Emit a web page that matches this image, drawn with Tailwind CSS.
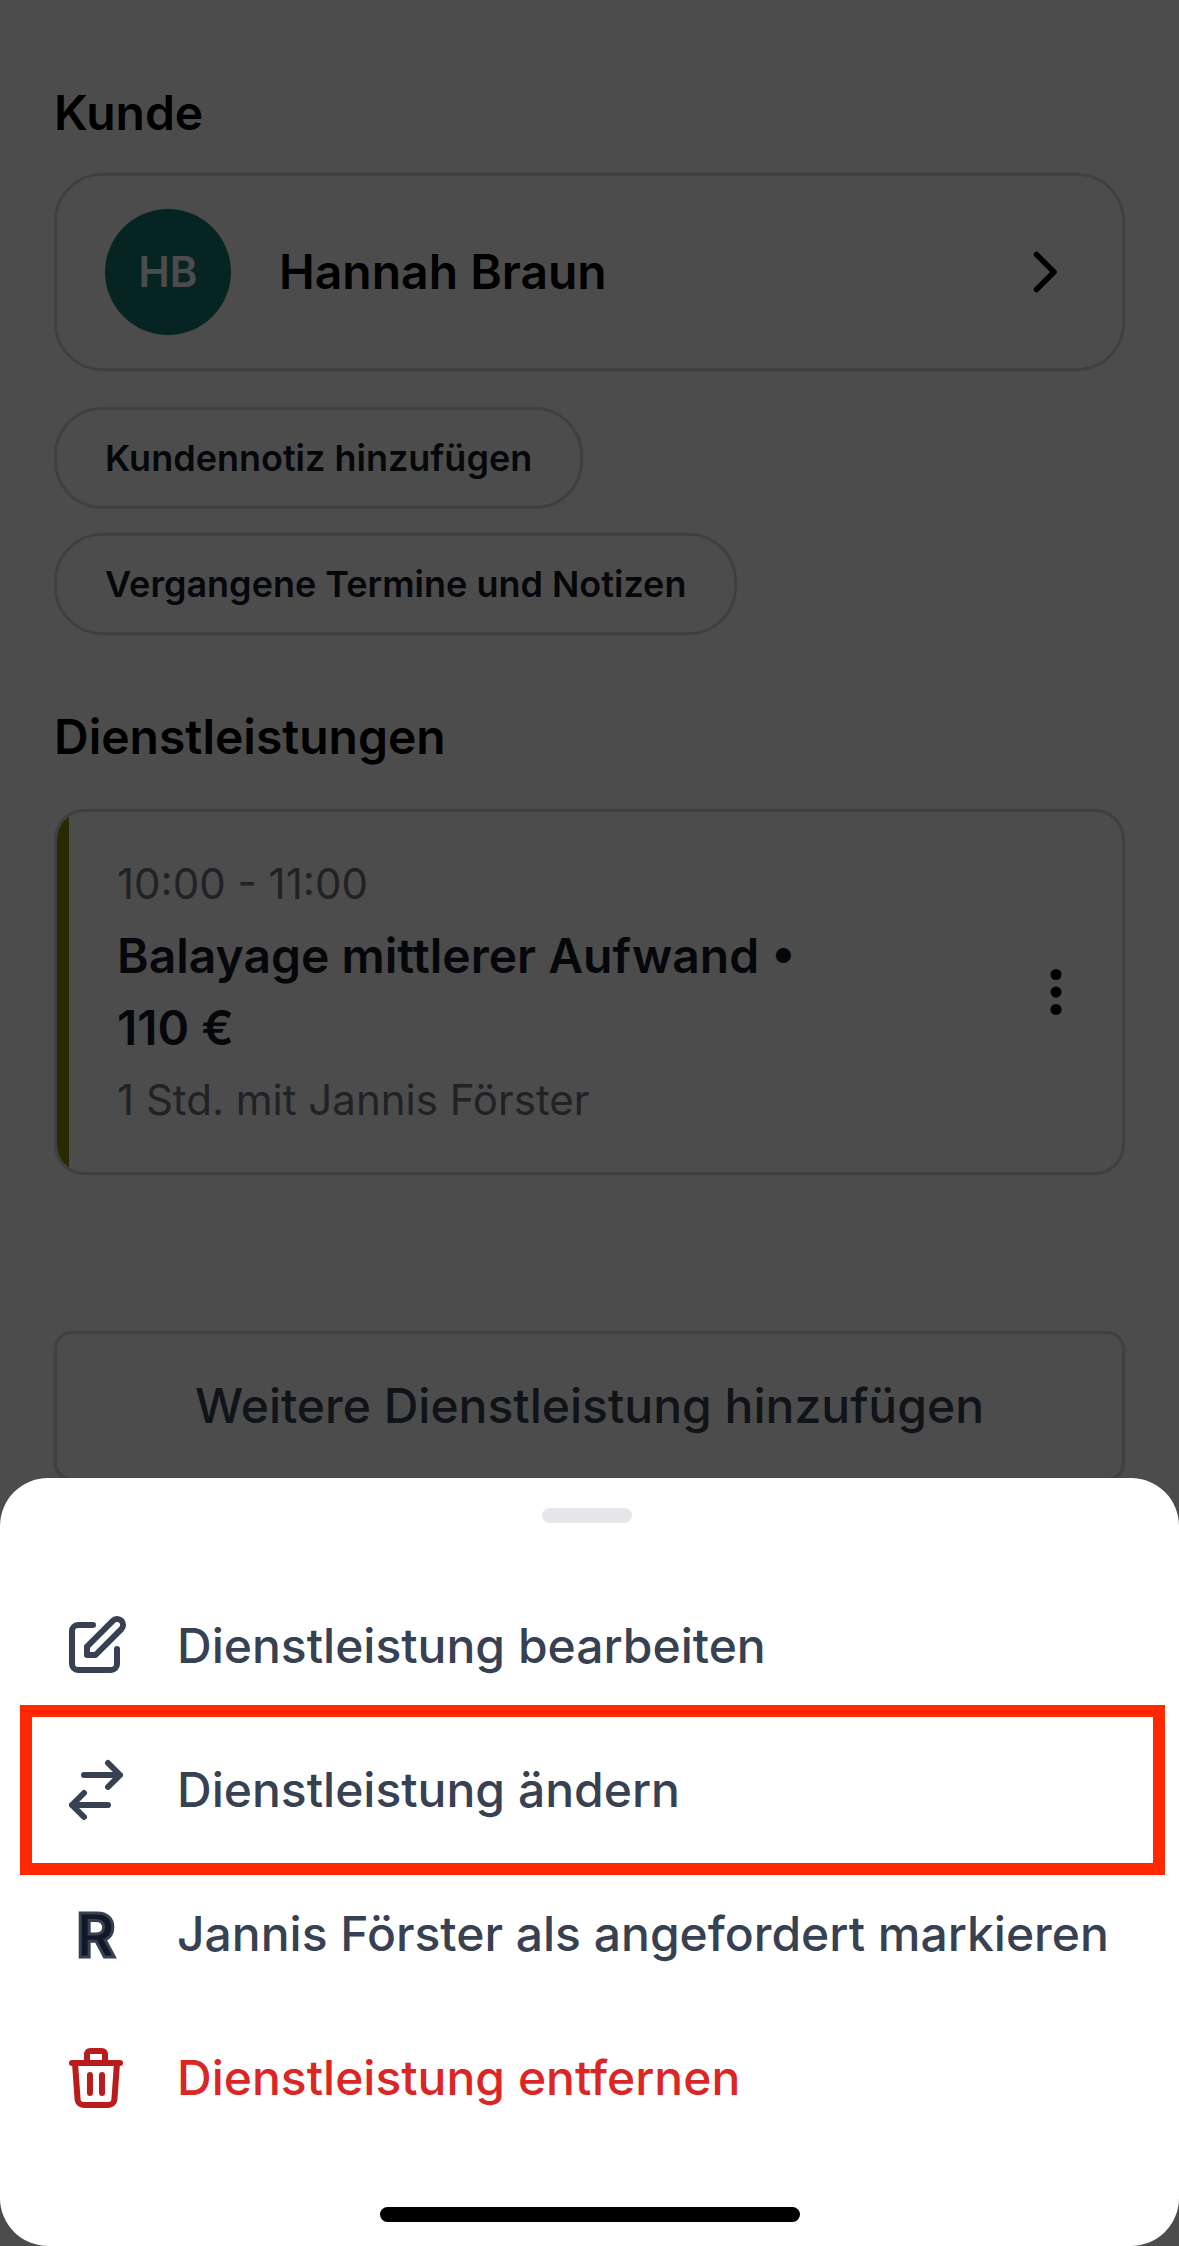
<!DOCTYPE html>
<html lang="de">
<head>
<meta charset="utf-8">
<meta name="viewport" content="width=device-width, initial-scale=1">
<title>Termin</title>
<script src="https://cdn.jsdelivr.net/npm/@tailwindcss/browser@4"></script>
</head>
<body class="min-h-screen overflow-hidden bg-white font-['Inter',sans-serif] text-5xl/[72px] text-black">

<main class="flex flex-col px-[54px] pt-[77px]">
  <section class="flex flex-col items-start">
    <h2 class="font-semibold">Kunde</h2>
    <a href="#kunde" class="mt-6 flex w-full items-center gap-12 rounded-[48px] border-3 border-[#d1d5db] px-12 py-[33px]">
      <span class="flex size-[126px] items-center justify-center rounded-full bg-[#14786e] text-[42px] font-semibold text-white">HB</span>
      <span class="flex-1 font-semibold">Hannah Braun</span>
      <svg class="size-[60px]" viewBox="0 0 24 24" fill="none" stroke="currentColor" stroke-width="2.2" stroke-linecap="round" stroke-linejoin="round" aria-hidden="true"><path d="M9 5l7 7-7 7"/></svg>
    </a>
    <button type="button" class="mt-9 rounded-[48px] border-3 border-[#d1d5db] px-12 py-6 text-4xl/[48px] font-semibold text-[#111827]">Kundennotiz hinzufügen</button>
    <button type="button" class="mt-6 rounded-[48px] border-3 border-[#d1d5db] px-12 py-6 text-4xl/[48px] font-semibold text-[#111827]">Vergangene Termine und Notizen</button>
  </section>

  <section class="mt-[66px] flex flex-col">
    <h2 class="font-semibold">Dienstleistungen</h2>
    <article class="mt-9 flex overflow-hidden rounded-[30px] border-3 border-[#d1d5db]">
      <div class="w-3 bg-[#8d8d00]"></div>
      <div class="flex flex-1 items-center py-9 pr-9 pl-12">
        <div class="flex-1 pr-36">
          <p class="text-[42px]/[72px] text-[#6b7280]">10:00 - 11:00</p>
          <h3 class="font-semibold text-[#111827]">Balayage mittlerer Aufwand • 110&nbsp;€</h3>
          <p class="text-[42px]/[72px] text-[#6b7280]">1 Std. mit Jannis Förster</p>
        </div>
        <button type="button" aria-label="Weitere Optionen">
          <svg class="block size-[60px]" viewBox="0 0 24 24" fill="currentColor" aria-hidden="true"><circle cx="12" cy="5" r="2.2"/><circle cx="12" cy="12" r="2.2"/><circle cx="12" cy="19" r="2.2"/></svg>
        </button>
      </div>
    </article>
    <button type="button" class="mt-[156px] rounded-[18px] border-3 border-[#d1d5db] py-9 font-medium text-[#374151] shadow-sm">Weitere Dienstleistung hinzufügen</button>
  </section>
</main>

<div class="fixed inset-0 flex flex-col justify-end bg-black/70">
  <div role="dialog" aria-label="Dienstleistung" class="flex flex-col items-center rounded-[48px] bg-white pt-[30px] pb-6">
    <div class="mr-[5px] h-[15px] w-[90px] rounded-lg bg-[#e5e7eb]"></div>
    <ul class="mt-[51px] w-full font-medium text-[#374151]">
      <li>
        <button type="button" class="flex h-36 w-full items-center gap-[45px] px-[60px] text-left">
          <svg class="size-[72px]" viewBox="0 0 24 24" fill="none" stroke="currentColor" stroke-width="2" stroke-linecap="round" stroke-linejoin="round" aria-hidden="true"><path d="M11 5H6a2 2 0 00-2 2v11a2 2 0 002 2h11a2 2 0 002-2v-5m-1.414-9.414a2 2 0 112.828 2.828L11.828 15H9v-2.828l8.586-8.586z"/></svg>
          Dienstleistung bearbeiten
        </button>
      </li>
      <li class="relative">
        <button type="button" class="flex h-36 w-full items-center gap-[45px] px-[60px] text-left">
          <svg class="size-[72px]" viewBox="0 0 24 24" fill="none" stroke="currentColor" stroke-width="2" stroke-linecap="round" stroke-linejoin="round" aria-hidden="true"><path d="M8 7h12m0 0l-4-4m4 4l-4 4m0 6H4m0 0l4 4m-4-4l4-4"/></svg>
          Dienstleistung ändern
        </button>
        <span class="pointer-events-none absolute -inset-y-[13px] right-[14px] left-5 border-12 border-[#ff2800]"></span>
      </li>
      <li>
        <button type="button" class="flex h-36 w-full items-center gap-[45px] px-[60px] text-left">
          <svg class="size-[72px]" viewBox="0 0 24 24" aria-hidden="true"><text x="12" y="19.8" text-anchor="middle" font-size="20" font-weight="700" fill="#111827" stroke="currentColor" stroke-width="1">R</text></svg>
          Jannis Förster als angefordert markieren
        </button>
      </li>
      <li>
        <button type="button" class="flex h-36 w-full items-center gap-[45px] px-[60px] text-left text-[#dc2626]">
          <svg class="size-[72px] text-[#b91c1c]" viewBox="0 0 24 24" fill="none" stroke="currentColor" stroke-width="2" stroke-linecap="round" stroke-linejoin="round" aria-hidden="true"><path d="M19 7l-.867 12.142A2 2 0 0116.138 21H7.862a2 2 0 01-1.995-1.858L5 7m5 4v6m4-6v6m1-10V4a1 1 0 00-1-1h-4a1 1 0 00-1 1v3M4 7h16"/></svg>
          Dienstleistung entfernen
        </button>
      </li>
    </ul>
    <div class="mt-[57px] h-[15px] w-[420px] rounded-full bg-black"></div>
  </div>
</div>

</body>
</html>
